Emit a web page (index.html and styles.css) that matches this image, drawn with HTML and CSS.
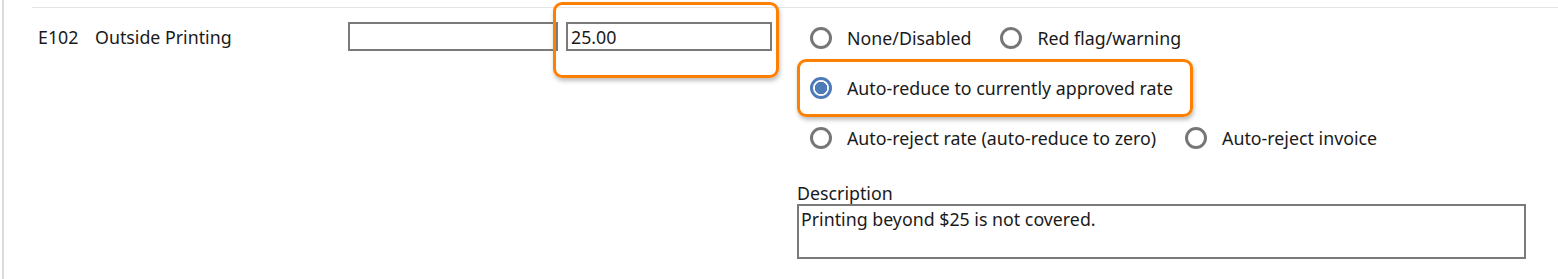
FILE: index.html
```html
<!DOCTYPE html>
<html lang="en">
<head>
    <meta charset="UTF-8">
    <meta name="viewport" content="width=device-width, initial-scale=1.0">
    <title>Expense Rate Rules</title>
    <link rel="stylesheet" href="styles.css">
</head>
<body>
    <div class="page">
        <div class="row">
            <div class="code">E102</div>
            <div class="name">Outside Printing</div>
            <input type="text" class="rate-box first" value="">
            <div class="rate-wrap">
                <input type="text" class="rate-box" value="25.00">
                <div class="highlight rate-highlight"></div>
            </div>

            <div class="options">
                <div class="option-line">
                    <label class="option"><span class="radio"></span>None/Disabled</label>
                    <label class="option"><span class="radio"></span>Red flag/warning</label>
                </div>
                <div class="option-line picked">
                    <label class="option"><span class="radio checked"></span>Auto-reduce to currently approved rate</label>
                    <div class="highlight option-highlight"></div>
                </div>
                <div class="option-line">
                    <label class="option"><span class="radio"></span>Auto-reject rate (auto-reduce to zero)</label>
                    <label class="option"><span class="radio"></span>Auto-reject invoice</label>
                </div>

                <div class="desc-group">
                    <label class="desc-label" for="desc">Description</label>
                    <textarea id="desc" class="desc">Printing beyond $25 is not covered.</textarea>
                </div>
            </div>
        </div>
    </div>
</body>
</html>
```

FILE: styles.css
```css
body {
    font-family: 'Noto Sans', 'Open Sans', sans-serif;
    background-color: #ffffff;
    color: #1a1a1a;
    margin: 0;
    padding: 0;
}
.page {
    border-left: 2px solid #dcdcdc;
    margin-left: 2px;
    height: 279px;
    box-sizing: border-box;
    padding: 7px 0 0 28px;
}
.row {
    display: flex;
    align-items: flex-start;
    border-top: 1px solid #e4e4e4;
    padding-top: 14px;
    font-size: 17.8px;
}
.code {
    width: 57px;
    padding-left: 6px;
    line-height: 30px;
}
.name {
    width: 253px;
    line-height: 30px;
}
.rate-box {
    width: 207px;
    height: 29px;
    box-sizing: border-box;
    border: 2px solid #7a7a7a;
    padding: 0 3px;
    font-family: 'Noto Sans', sans-serif;
    font-size: 17.8px;
    color: #1a1a1a;
    margin: 0;
    background: #fff;
}
.rate-box.first {
    width: 210px;
}
.rate-wrap {
    position: relative;
    margin-left: 8px;
}
.rate-wrap .rate-box {
    width: 206px;
}
.highlight {
    position: absolute;
    border: 3px solid #ff8000;
    border-radius: 9px;
    box-shadow: 1px 3px 4px rgba(0, 0, 0, 0.25);
    pointer-events: none;
}
.rate-highlight {
    left: -13px;
    top: -20px;
    width: 220px;
    height: 70px;
}
.options {
    margin-left: 25px;
    display: flex;
    flex-direction: column;
}
.option-line {
    position: relative;
    display: flex;
    height: 50px;
    padding-left: 13px;
    margin-top: -9px;
    align-items: center;
}
.option-line + .option-line {
    margin-top: 0;
}
.option {
    display: flex;
    align-items: center;
    margin-right: 29px;
}
.radio {
    width: 22px;
    height: 22px;
    box-sizing: border-box;
    border: 3px solid #767676;
    border-radius: 50%;
    margin-right: 15px;
    background: #fff;
}
.radio.checked {
    border-color: #4d7ab8;
    background: radial-gradient(circle, #4d7ab8 0 6px, #fff 6.5px);
}
.option-highlight {
    left: 0;
    top: -4px;
    width: 390px;
    height: 52px;
}
.desc-group {
    margin-top: 19px;
    display: flex;
    flex-direction: column;
}
.desc-label {
    font-size: 17.8px;
    line-height: 22px;
}
.desc {
    width: 729px;
    height: 55px;
    box-sizing: border-box;
    border: 2px solid #7a7a7a;
    padding: 1px 2px;
    font-family: 'Noto Sans', sans-serif;
    font-size: 17.8px;
    color: #1a1a1a;
    resize: none;
    margin: 0;
}
```
